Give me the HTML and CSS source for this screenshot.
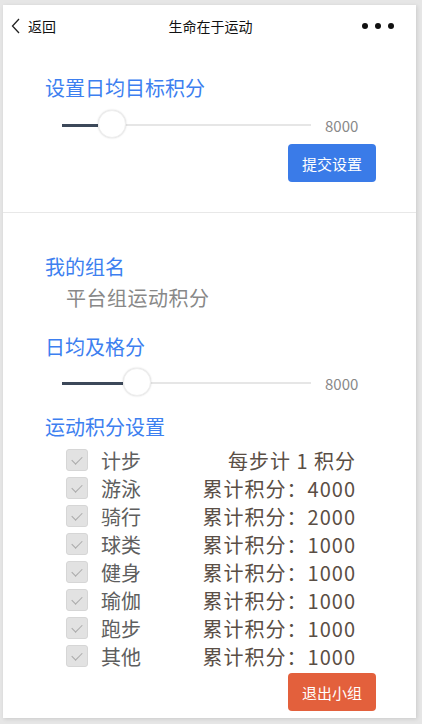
FILE: index.html
```html
<!doctype html>
<html>
<head>
<meta charset="utf-8">
<title>生命在于运动</title>
<meta name="viewport" content="width=device-width">
<link rel="stylesheet" href="styles.css">
</head>
<body>
<div class="phone">

<div class="navbar">
	<div class="nav-back">
		<svg width="10" height="16" viewBox="0 0 10 16"><path d="M8 1 L1.5 8 L8 15" fill="none" stroke="#222" stroke-width="1.3"/></svg>
		<span>返回</span>
	</div>
	<div class="nav-title">生命在于运动</div>
	<div class="nav-more"><i></i><i></i><i></i></div>
</div>

<div class="section section-top">
	<h2 class="label">设置日均目标积分</h2>
	<div class="slider-row">
		<div class="slider">
			<div class="slider-fill" style="width: 36px"></div>
			<div class="slider-thumb" style="left: 50px"></div>
		</div>
		<span class="slider-value">8000</span>
	</div>
	<div class="btn-row">
		<button class="btn btn-blue">提交设置</button>
	</div>
</div>

<div class="section section-group">
	<h2 class="label">我的组名</h2>
	<p class="group-name">平台组运动积分</p>

	<h2 class="label label-gap">日均及格分</h2>
	<div class="slider-row">
		<div class="slider">
			<div class="slider-fill" style="width: 61px"></div>
			<div class="slider-thumb" style="left: 75px"></div>
		</div>
		<span class="slider-value">8000</span>
	</div>

	<h2 class="label label-gap2">运动积分设置</h2>
	<ul class="sport-list">
		<li><span class="check"></span><span class="sport">计步</span><span class="score">每步计 1 积分</span></li>
		<li><span class="check"></span><span class="sport">游泳</span><span class="score">累计积分：4000</span></li>
		<li><span class="check"></span><span class="sport">骑行</span><span class="score">累计积分：2000</span></li>
		<li><span class="check"></span><span class="sport">球类</span><span class="score">累计积分：1000</span></li>
		<li><span class="check"></span><span class="sport">健身</span><span class="score">累计积分：1000</span></li>
		<li><span class="check"></span><span class="sport">瑜伽</span><span class="score">累计积分：1000</span></li>
		<li><span class="check"></span><span class="sport">跑步</span><span class="score">累计积分：1000</span></li>
		<li><span class="check"></span><span class="sport">其他</span><span class="score">累计积分：1000</span></li>
	</ul>
	<div class="btn-row btn-row-end">
		<button class="btn btn-red">退出小组</button>
	</div>
</div>

</div>
</body>
</html>
```

FILE: styles.css
```css
body {
	margin: 0;
	background: #e6e6e6;
	font-family: "Noto Sans CJK SC", "Noto Sans", sans-serif;
}
.phone {
	margin: 5px 6px 6px 3px;
	height: 713px;
	background: #fff;
	box-shadow: 1px 1px 4px rgba(0,0,0,0.12);
	overflow: hidden;
}
.navbar {
	height: 42px;
	display: flex;
	align-items: center;
	padding: 0 22px 0 8px;
	position: relative;
	font-size: 14px;
	color: #111;
}
.nav-back {
	display: flex;
	align-items: center;
	gap: 7px;
}
.nav-title {
	position: absolute;
	left: 0;
	right: 0;
	text-align: center;
	padding-left: 2px;
	pointer-events: none;
}
.nav-more {
	margin-left: auto;
	display: flex;
	gap: 7px;
}
.nav-more i {
	width: 6px;
	height: 6px;
	border-radius: 50%;
	background: #111;
}
.section {
	padding-left: 42px;
	padding-right: 40px;
}
.section-top {
	padding-top: 29px;
	padding-bottom: 30px;
	border-bottom: 1px solid #e8e8e8;
}
.section-group {
	padding-top: 42px;
}
.label {
	margin: 0;
	font-size: 20px;
	font-weight: normal;
	line-height: 24px;
	color: #3d7ff0;
}
.label-gap {
	margin-top: 25px;
}
.label-gap2 {
	margin-top: 18px;
}
.group-name {
	margin: 7px 0 0 21px;
	font-size: 20px;
	line-height: 24px;
	color: #888;
	letter-spacing: 0.5px;
}
.slider-row {
	display: flex;
	align-items: center;
	height: 28px;
	margin-top: 11px;
	padding-left: 17px;
}
.section-group .slider-row {
	margin-top: 10px;
}
.slider {
	position: relative;
	width: 249px;
	height: 2px;
	background: #e6e6e6;
}
.slider-fill {
	height: 3px;
	margin-top: -0.5px;
	background: #3c4859;
}
.slider-thumb {
	position: absolute;
	top: -14px;
	width: 28px;
	height: 28px;
	margin-left: -14px;
	border-radius: 50%;
	background: #fff;
	box-shadow: 0 0 2px rgba(0,0,0,0.18);
	box-sizing: border-box;
	border: 1px solid #efefef;
}
.slider-value {
	margin-left: 14px;
	font-size: 15px;
	color: #888;
}
.btn-row {
	display: flex;
	justify-content: flex-end;
	margin-top: 5px;
}
.btn-row-end {
	margin-top: 3px;
}
.btn {
	width: 88px;
	height: 38px;
	border: none;
	border-radius: 4px;
	font-family: inherit;
	font-size: 15px;
	color: #fff;
	cursor: pointer;
}
.btn-blue {
	background: #3a7be8;
}
.btn-red {
	background: #e3603c;
}
.sport-list {
	list-style: none;
	margin: 7px 0 0 0;
	padding: 0 21px 0 21px;
}
.sport-list li {
	display: flex;
	align-items: center;
	height: 28px;
	font-size: 20px;
	color: #5e5e5e;
}
.check {
	width: 22px;
	height: 22px;
	box-sizing: border-box;
	border: 1px solid #d6d6d6;
	border-radius: 3px;
	background: #e2e2e2;
	position: relative;
}
.check::after {
	content: "";
	position: absolute;
	left: 7px;
	top: 4px;
	width: 5px;
	height: 9px;
	border-right: 1.5px solid #aaa;
	border-bottom: 1.5px solid #aaa;
	transform: rotate(45deg);
}
.sport {
	margin-left: 13px;
}
.score {
	margin-left: auto;
	margin-right: -1px;
	letter-spacing: 1px;
	color: #5a4e45;
}
```
